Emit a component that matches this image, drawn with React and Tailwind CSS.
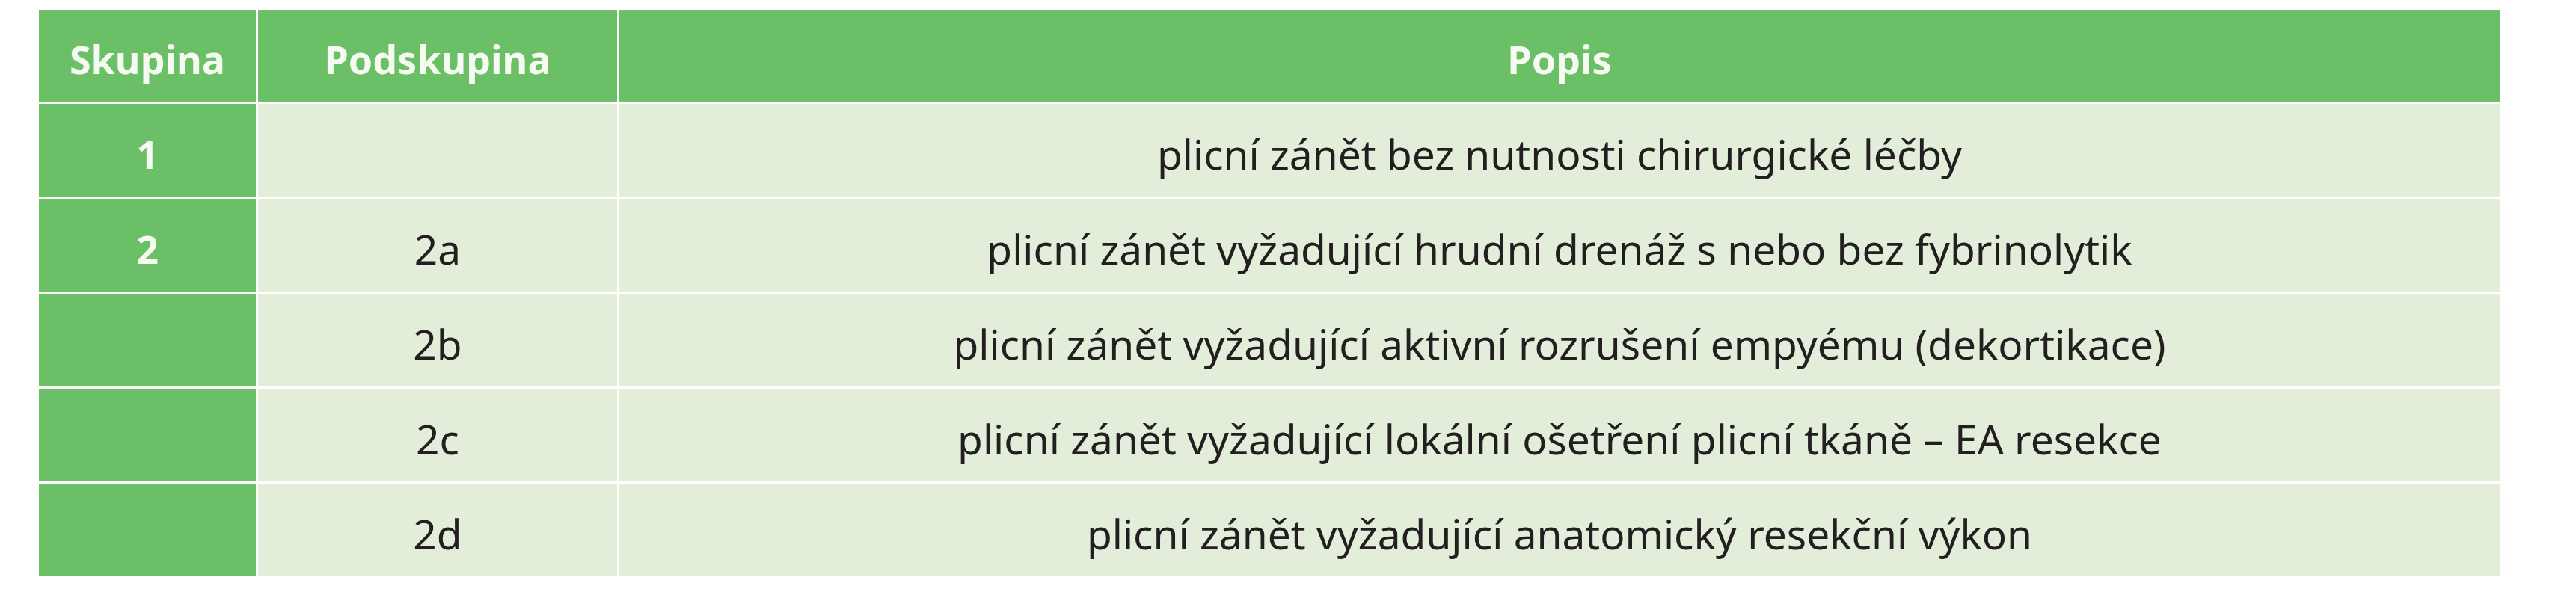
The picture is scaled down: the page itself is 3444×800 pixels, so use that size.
import React from "react";

const rows = [
  { group: "1", sub: "", text: "plicní zánět bez nutnosti chirurgické léčby" },
  { group: "2", sub: "2a", text: "plicní zánět vyžadující hrudní drenáž s nebo bez fybrinolytik" },
  { group: "", sub: "2b", text: "plicní zánět vyžadující aktivní rozrušení empyému (dekortikace)" },
  { group: "", sub: "2c", text: "plicní zánět vyžadující lokální ošetření plicní tkáně – EA resekce" },
  { group: "", sub: "2d", text: "plicní zánět vyžadující anatomický resekční výkon" },
];

function HeadCell({ children }) {
  return (
    <div className="flex h-[122px] items-center justify-center bg-[#6bbf67] pt-[8px] text-[52px] font-bold text-[#f6fbf2]">
      {children}
    </div>
  );
}

function BodyCell({ children, green = false }) {
  return (
    <div
      className={`flex h-[124px] items-center justify-center whitespace-nowrap pt-[10px] ${
        green ? "bg-[#6bbf67] font-bold text-[#f6fbf2] text-[52px]" : "bg-[#e2eed9] text-[#231f20] text-[55px]"
      }`}
    >
      {children}
    </div>
  );
}

export default function App() {
  return (
    <div className="min-h-[800px] w-[3444px] bg-white pl-[52px] pt-[13px] font-['Noto_Sans',sans-serif]">
      <div className="grid w-[3290px] grid-cols-[290px_480px_1fr] gap-[3px] border-t border-[#d8f0d4] bg-white">
        <HeadCell>Skupina</HeadCell>
        <HeadCell>Podskupina</HeadCell>
        <HeadCell>Popis</HeadCell>
        {rows.map((row, i) => (
          <React.Fragment key={i}>
            <BodyCell green>{row.group}</BodyCell>
            <BodyCell>{row.sub}</BodyCell>
            <BodyCell>{row.text}</BodyCell>
          </React.Fragment>
        ))}
      </div>
    </div>
  );
}
